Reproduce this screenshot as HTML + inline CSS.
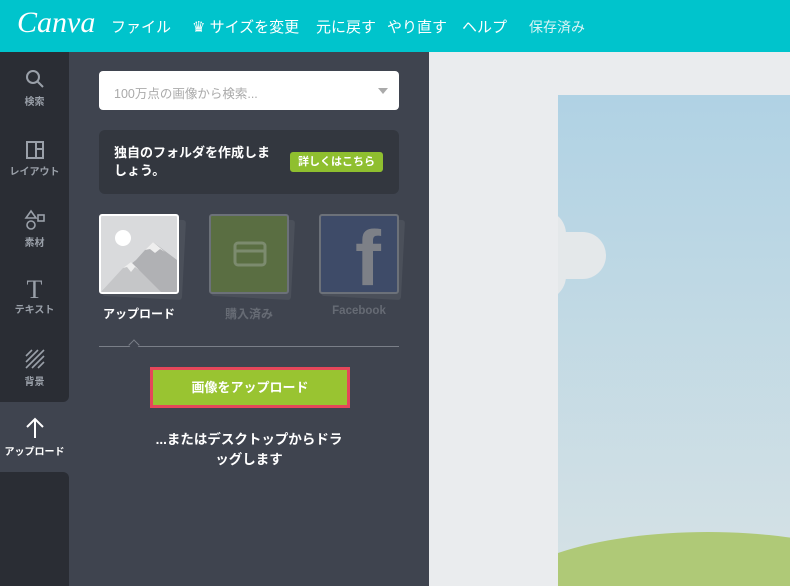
<!DOCTYPE html>
<html><head><meta charset="utf-8"><style>
*{margin:0;padding:0;box-sizing:border-box}
html,body{width:790px;height:586px;overflow:hidden}
body{position:relative;background:#eaecee;font-family:"Liberation Sans","Noto Sans CJK JP",sans-serif}
.top{position:absolute;left:0;top:0;width:790px;height:52px;background:#00c4cc;color:#fff}
.top span{position:absolute;top:16px;font-size:15px}
.logo{position:absolute;left:17px;top:6px;font-family:"Liberation Serif",serif;font-style:italic;font-size:30px;color:#fff}
.side{position:absolute;left:0;top:52px;width:69px;height:534px;background:#3f444f}
.sb{position:absolute;left:0;width:69px;background:#2a2d34}
.it{position:absolute;left:0;width:69px;text-align:center;font-size:10px;color:#9aa0a9;font-weight:bold}
.panel{position:absolute;left:69px;top:52px;width:360px;height:534px;background:#3f444f}
.search{position:absolute;left:30px;top:19px;width:300px;height:39px;background:#fff;border-radius:4px;color:#aaa;font-size:12.5px;padding:12px 15px}
.tri{position:absolute;right:11px;top:17px;border:5px solid transparent;border-top:6px solid #aaa}
.box{position:absolute;left:30px;top:78px;width:300px;height:64px;background:#33373f;border-radius:6px;color:#fff;font-size:13px;font-weight:bold}
.btn{position:absolute;left:191px;top:22px;width:93px;height:20px;background:#8fbf2f;border-radius:3px;font-size:11px;text-align:center;line-height:20px}
.card{position:absolute;top:162px;width:80px;height:80px;border-radius:3px}
.lbl{position:absolute;top:253px;font-size:12px;text-align:center;width:80px;font-weight:bold}
</style></head><body>
<div class="top">
<div class="logo">Canva</div>
<span style="left:111px">ファイル</span>
<span style="left:192px">♛ サイズを変更</span>
<span style="left:316px">元に戻す</span>
<span style="left:387px">やり直す</span>
<span style="left:462px">ヘルプ</span>
<span style="left:529px;color:#d8f4f5;font-size:14px;top:17px">保存済み</span>
</div>
<div class="side">
<div class="sb" style="top:0;height:350px;border-bottom-right-radius:6px"></div>
<div class="sb" style="top:420px;height:114px;border-top-right-radius:6px"></div>
<div class="it" style="top:16px"><svg width="22" height="22" viewBox="0 0 22 22"><circle cx="9" cy="9" r="6" fill="none" stroke="#9aa0a9" stroke-width="2"/><line x1="13" y1="13" x2="19" y2="19" stroke="#9aa0a9" stroke-width="2"/></svg><br>検索</div>
<div class="it" style="top:88px"><svg width="20" height="20" viewBox="0 0 20 20"><rect x="2" y="2" width="16" height="16" fill="none" stroke="#9aa0a9" stroke-width="2"/><line x1="11" y1="2" x2="11" y2="18" stroke="#9aa0a9" stroke-width="2"/><line x1="11" y1="9" x2="18" y2="9" stroke="#9aa0a9" stroke-width="2"/></svg><br>レイアウト</div>
<div class="it" style="top:157px"><svg width="22" height="22" viewBox="0 0 22 22"><path d="M7 2L12 9H2Z" fill="none" stroke="#9aa0a9" stroke-width="1.6"/><circle cx="7" cy="16" r="4" fill="none" stroke="#9aa0a9" stroke-width="1.6"/><rect x="14" y="6" width="6" height="6" fill="none" stroke="#9aa0a9" stroke-width="1.6"/></svg><br>素材</div>
<div class="it" style="top:227px"><span style="font-family:'Liberation Serif',serif;font-size:26px;line-height:22px;font-weight:normal">T</span><br>テキスト</div>
<div class="it" style="top:296px"><svg width="22" height="22" viewBox="0 0 22 22" stroke="#9aa0a9" stroke-width="1.6"><line x1="2" y1="8" x2="8" y2="2"/><line x1="2" y1="14" x2="14" y2="2"/><line x1="2" y1="20" x2="20" y2="2"/><line x1="8" y1="20" x2="20" y2="8"/><line x1="14" y1="20" x2="20" y2="14"/></svg><br>背景</div>
<div class="it" style="top:364px;color:#fff"><svg width="22" height="24" viewBox="0 0 22 24" stroke="#fff" stroke-width="2" fill="none"><path d="M11 22V3M3 11L11 3L19 11"/></svg><br>アップロード</div>
</div>
<div class="panel">
<div class="search">100万点の画像から検索...<div class="tri"></div></div>
<div class="box"><div style="position:absolute;left:15px;top:14px;line-height:18px">独自のフォルダを作成しま<br>しょう。</div><div class="btn">詳しくはこちら</div></div>
<div class="card" style="left:35px;top:166px;background:#4b505a;transform:rotate(3deg)"></div>
<div class="card" style="left:30px;background:#d9dadc;border:2px solid #fff;overflow:hidden"><svg width="76" height="76" viewBox="0 0 76 76"><circle cx="22" cy="22" r="8" fill="#fff"/><path d="M0 76L20 56L35 44L44 34L52 26L60 32L76 44V76Z" fill="#b0b1b4"/><path d="M0 76L22 52L30 46L60 76Z" fill="#c5c6c8"/><path d="M22 52L30 46L38 54L34 51L30 56L26 51Z" fill="#eee"/><path d="M44 34L52 26L64 36L59 33L54 37L49 33Z" fill="#eee"/></svg></div>
<div class="card" style="left:144px;top:166px;background:#4b505a;transform:rotate(3deg)"></div>
<div class="card" style="left:140px;background:#5a6e42;border:2px solid #6c7179"><svg width="76" height="76" viewBox="0 0 76 76"><rect x="24" y="27" width="30" height="22" rx="3" fill="none" stroke="#7c8b6e" stroke-width="3"/><line x1="24" y1="35" x2="54" y2="35" stroke="#7c8b6e" stroke-width="3"/></svg></div>
<div class="card" style="left:254px;top:166px;background:#4b505a;transform:rotate(3deg)"></div>
<div class="card" style="left:250px;background:#3e4b68;border:2px solid #6c7179;overflow:hidden"><span style="position:absolute;left:34px;top:2px;font-size:78px;font-weight:bold;color:#7d8087;line-height:80px">f</span></div>
<div class="lbl" style="left:30px;color:#fff">アップロード</div>
<div class="lbl" style="left:140px;color:#666b74">購入済み</div>
<div class="lbl" style="left:250px;color:#666b74;font-size:11.5px">Facebook</div>
<div style="position:absolute;left:30px;top:294px;width:300px;height:1px;background:#7a7f88"></div>
<div style="position:absolute;left:61px;top:289px;width:8px;height:8px;border-left:1px solid #7a7f88;border-top:1px solid #7a7f88;background:#3f444f;transform:rotate(45deg)"></div>
<div style="position:absolute;left:81px;top:315px;width:200px;height:41px;background:#e5475a;padding:3px"><div style="width:194px;height:35px;background:#99c431;color:#fff;font-size:13px;font-weight:bold;text-align:center;line-height:35px">画像をアップロード</div></div>
<div style="position:absolute;left:30px;top:378px;width:300px;text-align:center;color:#fff;font-size:13.5px;font-weight:bold;line-height:20px">...またはデスクトップからドラ<br>ッグします</div>
</div>
<div style="position:absolute;left:558px;top:95px;width:232px;height:491px;background:linear-gradient(#b0d2e4,#d6e2e5);overflow:hidden">
<div style="position:absolute;left:-40px;top:115px;width:48px;height:90px;background:#e4e8ea;border-radius:24px"></div>
<div style="position:absolute;left:-30px;top:137px;width:78px;height:47px;background:#e4e8ea;border-radius:24px"></div>
<div style="position:absolute;left:-60px;top:437px;width:420px;height:140px;background:#afc977;border-radius:50%"></div>
</div>
</body></html>
